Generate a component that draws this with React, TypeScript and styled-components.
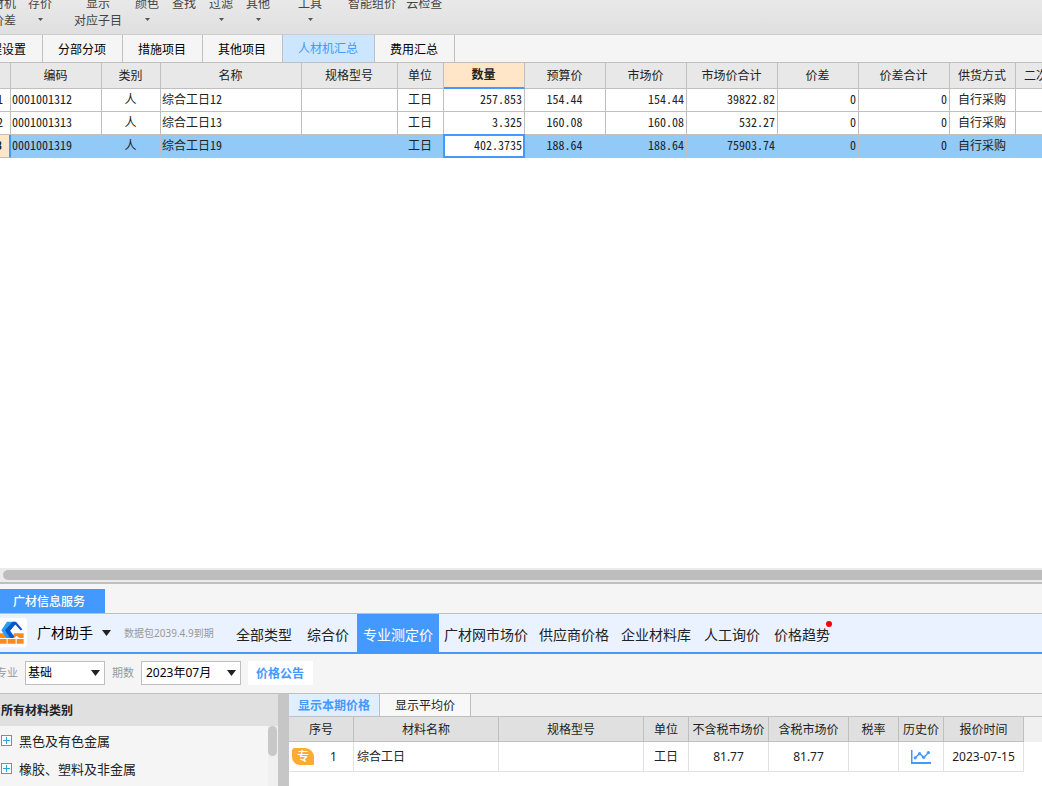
import React from "react";
import styled, { createGlobalStyle, css } from "styled-components";

const c = {
  line: "#bfbfbf",
  softLine: "#e2e2e2",
  blue: "#4499ff",
  bar: "#f5f5f5",
  head: "#e8e8e8",
  ink: "#222222",
};

const Global = createGlobalStyle`
  *, *::before, *::after { box-sizing: border-box; }
  body { margin: 0; background: #fff; color: ${c.ink}; overflow: hidden;
    font: 12px/16px "Noto Sans", "Noto Sans CJK SC", sans-serif; }
  button, select { font: inherit; color: inherit; border: 0; padding: 0; margin: 0; background: none; white-space: nowrap; }
`;

const Page = styled.div`
  display: flex;
  flex-direction: column;
  min-height: 100vh;
  overflow: hidden;
`;

/* ---------- ribbon ---------- */
const Ribbon = styled.header`
  display: flex;
  align-items: flex-end;
  height: 35px;
  padding-bottom: 5px;
  overflow: hidden;
  background: linear-gradient(#e9e9e9, #dfdfdf);
  border-bottom: 1px solid #cdcdcd;
`;
const RibbonGroup = styled.div<{ $before: number; $gap: number }>`
  display: flex;
  margin-left: ${(p) => p.$before}px;
  gap: ${(p) => p.$gap}px;
`;
const RibbonButton = styled.button<{ $cut?: boolean }>`
  display: flex;
  flex-direction: column;
  align-items: ${(p) => (p.$cut ? "flex-end" : "center")};
  ${(p) => p.$cut && css`width: 16px;`}
  height: 34px;
  flex: none;
  line-height: 17px;
  color: #444;
`;
const Drop = styled.span`
  display: flex;
  height: 15px;
  align-items: center;
`;

/* ---------- module tabs ---------- */
const ModuleTabs = styled.nav`
  display: flex;
  height: 28px;
  background: ${c.bar};
  border-bottom: 1px solid ${c.line};
`;
const ModuleTab = styled.button<{ $on?: boolean; $cut?: boolean }>`
  display: flex;
  align-items: center;
  justify-content: ${(p) => (p.$cut ? "flex-end" : "center")};
  flex: none;
  padding: ${(p) => (p.$on ? 0 : 2)}px 16px 0 15px;
  ${(p) => p.$cut && css`width: 43px; padding-left: 0; overflow: hidden;`}
  border-right: 1px solid ${c.line};
  background: ${(p) => (p.$on ? "#cce6ff" : c.bar)};
  color: ${(p) => (p.$on ? c.blue : "#000")};
`;

/* ---------- resource grid ---------- */
const GridArea = styled.main`
  flex: 1;
  overflow: hidden;
  background: #fff;
`;
const Grid = styled.table`
  width: 1082px;
  table-layout: fixed;
  border-collapse: separate;
  border-spacing: 0;
  font-family: "Noto Sans CJK SC", sans-serif;
  font-feature-settings: "hwid";
`;
const GridHead = styled.th<{ $on?: boolean }>`
  height: 26px;
  padding: 0 1px 2px 0;
  overflow: hidden;
  white-space: nowrap;
  font-weight: ${(p) => (p.$on ? 700 : 400)};
  background: ${(p) => (p.$on ? "#ffe6c8" : c.head)};
  border-right: 1px solid ${c.line};
  border-bottom: ${(p) => (p.$on ? `2px solid ${c.blue}` : `1px solid ${c.line}`)};
`;
const GridRow = styled.tr<{ $on?: boolean }>`
  background: ${(p) => (p.$on ? "#91c9f7" : "#fff")};
`;
type Align = "left" | "center" | "right";
const GridCell = styled.td<{ $align: Align; $edit?: boolean }>`
  height: 23px;
  padding: 0 2px 2px 1px;
  overflow: hidden;
  white-space: nowrap;
  text-align: ${(p) => p.$align};
  border-right: 1px solid ${c.line};
  border-bottom: 1px solid ${c.line};
  ${(p) =>
    p.$edit &&
    css`
      position: relative;
      background: #fff;
      border-color: ${c.blue};
      box-shadow: inset 1px 1px ${c.blue}, inset -1px -1px ${c.blue}, -1px -1px ${c.blue},
        -1px 0 ${c.blue}, 0 -1px ${c.blue};
    `}
`;
const RowNumber = styled.th<{ $on?: boolean }>`
  padding: 0 0 2px;
  overflow: hidden;
  font-weight: ${(p) => (p.$on ? 700 : 400)};
  background: ${(p) => (p.$on ? "#ffe6c8" : "#fff")};
  border-right: ${(p) => (p.$on ? `2px solid ${c.blue}` : `1px solid ${c.line}`)};
  border-bottom: 1px solid ${c.line};
`;
const RowDigits = styled.span`
  display: flex;
  justify-content: flex-end;
  padding-right: 7px;
`;
const HScroll = styled.div`
  height: 16px;
  padding: 2px 0 0 3px;
  background: #ebebeb;
  border-bottom: 2px solid ${c.line};
`;
const HThumb = styled.div`
  height: 10px;
  border-radius: 5px 0 0 5px;
  background: #bdbdbd;
`;

/* ---------- price service panel ---------- */
const DockTabs = styled.div`
  display: flex;
  align-items: flex-end;
  height: 30px;
  background: ${c.bar};
  border-bottom: 1px solid ${c.line};
`;
const DockTab = styled.button`
  width: 105px;
  height: 24px;
  padding: 2px 7px 0 0;
  background: ${c.blue};
  color: #fff;
  font-weight: 500;
`;
const Assistant = styled.nav`
  display: flex;
  align-items: stretch;
  height: 40px;
  background: #ebf2ff;
  border-bottom: 2px solid ${c.blue};
  font-size: 14px;
`;
const Brand = styled.button`
  display: flex;
  align-items: center;
  gap: 9px;
  color: #000;
`;
const BrandName = styled.span`
  display: flex;
  align-items: center;
  gap: 9px;
`;
const Expiry = styled.span`
  display: flex;
  align-items: center;
  width: 118px;
  padding-left: 13px;
  font-size: 10px;
  color: #999;
  white-space: nowrap;
`;
const SourceTab = styled.button<{ $pad: number; $on?: boolean }>`
  position: relative;
  flex: none;
  padding: 3px ${(p) => p.$pad}px 0;
  background: ${(p) => (p.$on ? c.blue : "transparent")};
  color: ${(p) => (p.$on ? "#fff" : c.ink)};
`;
const NewDot = styled.i`
  position: absolute;
  top: 7px;
  right: 5px;
  width: 6px;
  height: 6px;
  border-radius: 50%;
  background: #f00;
`;
const Filters = styled.form`
  display: flex;
  align-items: center;
  height: 40px;
  padding-bottom: 2px;
  background: ${c.bar};
  border-bottom: 1px solid ${c.line};
`;
const FilterLabel = styled.label<{ $cut?: boolean }>`
  display: flex;
  justify-content: flex-end;
  flex: none;
  width: ${(p) => (p.$cut ? 25 : 36)}px;
  padding-right: 7px;
  overflow: hidden;
  white-space: nowrap;
  font-size: 11px;
  color: #999;
`;
const SelectBox = styled.span<{ $w: number }>`
  position: relative;
  display: flex;
  width: ${(p) => p.$w}px;
  height: 24px;
  border: 1px solid ${c.line};
  background: #fff;
  svg { position: absolute; right: 4px; top: 8px; pointer-events: none; }
`;
const Select = styled.select<{ $indent: number }>`
  appearance: none;
  width: 100%;
  padding: 1px 0 0 ${(p) => p.$indent}px;
  color: #000;
`;
const Notice = styled.button`
  height: 24px;
  margin-left: 7px;
  padding: 2px 9px 0 8px;
  background: #fff;
  color: ${c.blue};
  font-weight: 700;
`;
const Body = styled.div`
  display: flex;
  align-items: stretch;
`;
const Sidebar = styled.aside`
  width: 278px;
  flex: none;
  display: flex;
  flex-direction: column;
  background: ${c.bar};
`;
const SideTitle = styled.h2`
  margin: 0;
  height: 32px;
  padding: 2px 0 0 1px;
  font-size: 12px;
  line-height: 30px;
  background: #e0e0e0;
`;
const SideScroll = styled.div`
  display: flex;
  flex: 1;
`;
const Tree = styled.ul`
  flex: 1;
  margin: 0;
  padding: 0 0 4px;
  list-style: none;
  font-size: 13px;
`;
const TreeItem = styled.button`
  display: flex;
  align-items: center;
  gap: 7px;
  height: 28px;
  padding: 1px 0 0 1px;
`;
const VTrack = styled.div`
  width: 10px;
  background: #f0f0f0;
`;
const VThumb = styled.div`
  width: 9px;
  height: 30px;
  border-radius: 5px;
  background: #c8c8c8;
`;
const Splitter = styled.div`
  width: 11px;
  flex: none;
  background: #c6c6c6;
`;
const Results = styled.section`
  flex: 1;
  min-width: 0;
  overflow: hidden;
`;
const ViewTabs = styled.div`
  display: flex;
  height: 23px;
  background: #f1f1f1;
  border-bottom: 1px solid ${c.line};
`;
const ViewTab = styled.button<{ $on?: boolean }>`
  width: 91px;
  padding-top: 2px;
  border-right: 1px solid ${c.line};
  background: ${(p) => (p.$on ? "#e0efff" : "#f8f8f8")};
  color: ${(p) => (p.$on ? c.blue : c.ink)};
  font-weight: ${(p) => (p.$on ? 700 : 400)};
`;
const HeadStrip = styled.div`
  background: linear-gradient(#f0f0f0 25px, #fff 25px);
`;
const PriceTable = styled.table`
  width: 735px;
  table-layout: fixed;
  border-collapse: separate;
  border-spacing: 0;
`;
const PriceHead = styled.th`
  height: 25px;
  padding: 2px 0 0;
  white-space: nowrap;
  font-weight: 400;
  background: #e0e0e0;
  border-right: 1px solid ${c.line};
  border-bottom: 1px solid ${c.line};
`;
const PriceCell = styled.td<{ $align?: Align }>`
  height: 30px;
  padding: 0 3px;
  white-space: nowrap;
  text-align: ${(p) => p.$align ?? "center"};
  background: #fff;
  border-right: 1px solid ${c.softLine};
  border-bottom: 1px solid ${c.softLine};
  svg { display: block; margin: 0 auto; }
`;
const Ordinal = styled.span`
  display: flex;
  align-items: center;
  gap: 16px;
`;
const Badge = styled.span`
  width: 22px;
  height: 17px;
  border-radius: 3px 9px 1px 8px;
  background: #ffaa33;
  color: #fff;
  font-size: 12px;
  font-weight: 500;
  line-height: 17px;
  text-align: center;
`;

const Caret = ({ w = 9, h = 6, fill = "#222" }: { w?: number; h?: number; fill?: string }) => (
  <svg width={w} height={h} viewBox="0 0 10 6" preserveAspectRatio="none" aria-hidden>
    <path d="M0 0H10L5 6Z" fill={fill} />
  </svg>
);

const Logo = () => (
  <svg width="28" height="30" viewBox="0 0 84 90" aria-hidden>
    <path d="M0 0H70Q81 0 81 11V77Q81 88 70 88H0Z" fill="#fff" />
    <path d="M0 46H12L21 60H0ZM42 46H71V60H58L50 53L42 60H36ZM0 63H20V77H0ZM23 63H47V77H23ZM50 63H71V77H50Z" fill="#ff8a17" />
    <path d="M4 37L21 11H42L22 37L36 60H19Z" fill="#2b9bf4" />
    <path d="M38 11H48L67 34L62 38L46 20L31 38L43 57L38 60H30L15 37Z" fill="#0b56c8" />
    <path d="M46 20L62 38L55 44H37L31 38Z" fill="#fff" />
  </svg>
);

const PlusBox = () => (
  <svg width="11" height="11" viewBox="0 0 11 11" aria-hidden>
    <rect x=".5" y=".5" width="10" height="10" fill="#fff" stroke="#8a8a8a" />
    <path d="M2 5.5H9M5.5 2V9" stroke="#28a8d8" />
  </svg>
);

const Trend = () => (
  <svg width="20" height="14" viewBox="0 0 20 14" fill={c.blue} aria-hidden>
    <path d="M0 0H1.5V12H20V14H0Z" />
    <path d="M4 8L8.6 3.5L12.7 7.5L17.6 2.5" fill="none" stroke={c.blue} strokeWidth="1.4" />
    <circle cx="4.2" cy="7.8" r="1.6" />
    <circle cx="8.6" cy="3.7" r="1.6" />
    <circle cx="12.7" cy="7.3" r="1.6" />
    <circle cx="17.4" cy="2.6" r="1.6" />
  </svg>
);

type Tool = { top: string; bottom?: string; drop?: boolean; cut?: boolean };
const ribbon: { before: number; gap: number; tools: Tool[] }[] = [
  { before: 0, gap: 12, tools: [{ top: "材机", bottom: "价差", cut: true }, { top: "存价", drop: true }] },
  {
    before: 22,
    gap: 13,
    tools: [
      { top: "显示", bottom: "对应子目" },
      { top: "颜色", drop: true },
      { top: "查找" },
      { top: "过滤", drop: true },
      { top: "其他", drop: true },
    ],
  },
  { before: 28, gap: 12, tools: [{ top: "工具", drop: true }] },
  { before: 26, gap: 10, tools: [{ top: "智能组价" }, { top: "云检查" }] },
];

const modules = ["程设置", "分部分项", "措施项目", "其他项目", "人材机汇总", "费用汇总"];

const columns: { name: string; w: number; align: Align }[] = [
  { name: "编码", w: 91, align: "left" },
  { name: "类别", w: 59, align: "center" },
  { name: "名称", w: 141, align: "left" },
  { name: "规格型号", w: 96, align: "left" },
  { name: "单位", w: 46, align: "center" },
  { name: "数量", w: 81, align: "right" },
  { name: "预算价", w: 81, align: "center" },
  { name: "市场价", w: 81, align: "right" },
  { name: "市场价合计", w: 91, align: "right" },
  { name: "价差", w: 81, align: "right" },
  { name: "价差合计", w: 91, align: "right" },
  { name: "供货方式", w: 66, align: "center" },
  { name: "二次分析", w: 66, align: "center" },
];

const rows = [
  ["0001001312", "人", "综合工日12", "", "工日", "257.853", "154.44", "154.44", "39822.82", "0", "0", "自行采购", ""],
  ["0001001313", "人", "综合工日13", "", "工日", "3.325", "160.08", "160.08", "532.27", "0", "0", "自行采购", ""],
  ["0001001319", "人", "综合工日19", "", "工日", "402.3735", "188.64", "188.64", "75903.74", "0", "0", "自行采购", ""],
];
const activeRow = 2;
const activeCol = 5;

const sources = ["全部类型", "综合价", "专业测定价", "广材网市场价", "供应商价格", "企业材料库", "人工询价", "价格趋势"];

const priceColumns: [string, number][] = [
  ["序号", 65],
  ["材料名称", 145],
  ["规格型号", 145],
  ["单位", 45],
  ["不含税市场价", 80],
  ["含税市场价", 80],
  ["税率", 50],
  ["历史价", 45],
  ["报价时间", 80],
];

export default function App() {
  return (
    <Page>
      <Global />
      <Ribbon>
        {ribbon.map((g, i) => (
          <RibbonGroup key={i} $before={g.before} $gap={g.gap}>
            {g.tools.map((t) => (
              <RibbonButton key={t.top} type="button" $cut={t.cut}>
                <span>{t.top}</span>
                {t.bottom && <span>{t.bottom}</span>}
                {t.drop && (
                  <Drop>
                    <Caret w={5} h={3} fill="#555" />
                  </Drop>
                )}
              </RibbonButton>
            ))}
          </RibbonGroup>
        ))}
      </Ribbon>

      <ModuleTabs>
        {modules.map((m, i) => (
          <ModuleTab key={m} type="button" $cut={i === 0} $on={i === 4}>
            {m}
          </ModuleTab>
        ))}
      </ModuleTabs>

      <GridArea>
        <Grid>
          <colgroup>
            <col style={{ width: 11 }} />
            {columns.map((col) => (
              <col key={col.name} style={{ width: col.w }} />
            ))}
          </colgroup>
          <thead>
            <tr>
              <GridHead />
              {columns.map((col, i) => (
                <GridHead key={col.name} $on={i === activeCol}>
                  {col.name}
                </GridHead>
              ))}
            </tr>
          </thead>
          <tbody>
            {rows.map((row, r) => (
              <GridRow key={row[0]} $on={r === activeRow}>
                <RowNumber scope="row" $on={r === activeRow}>
                  <RowDigits>{r + 1}</RowDigits>
                </RowNumber>
                {row.map((v, i) => (
                  <GridCell key={i} $align={columns[i].align} $edit={r === activeRow && i === activeCol}>
                    {v}
                  </GridCell>
                ))}
              </GridRow>
            ))}
          </tbody>
        </Grid>
      </GridArea>
      <HScroll>
        <HThumb />
      </HScroll>

      <DockTabs>
        <DockTab type="button">广材信息服务</DockTab>
      </DockTabs>
      <Assistant>
        <Brand type="button">
          <Logo />
          <BrandName>
            广材助手
            <Caret />
          </BrandName>
        </Brand>
        <Expiry>数据包2039.4.9到期</Expiry>
        {sources.map((s, i) => (
          <SourceTab key={s} type="button" $pad={11 - s.length} $on={i === 2}>
            {s}
            {i === sources.length - 1 && <NewDot />}
          </SourceTab>
        ))}
      </Assistant>
      <Filters>
        <FilterLabel htmlFor="major" $cut>
          专业
        </FilterLabel>
        <SelectBox $w={80}>
          <Select id="major" $indent={2}>
            <option>基础</option>
          </Select>
          <Caret />
        </SelectBox>
        <FilterLabel htmlFor="period">期数</FilterLabel>
        <SelectBox $w={100}>
          <Select id="period" $indent={4}>
            <option>2023年07月</option>
          </Select>
          <Caret />
        </SelectBox>
        <Notice type="button">价格公告</Notice>
      </Filters>

      <Body>
        <Sidebar>
          <SideTitle>所有材料类别</SideTitle>
          <SideScroll>
            <Tree>
              {["黑色及有色金属", "橡胶、塑料及非金属"].map((t) => (
                <li key={t}>
                  <TreeItem type="button">
                    <PlusBox />
                    {t}
                  </TreeItem>
                </li>
              ))}
            </Tree>
            <VTrack>
              <VThumb />
            </VTrack>
          </SideScroll>
        </Sidebar>
        <Splitter />
        <Results>
          <ViewTabs>
            <ViewTab type="button" $on>
              显示本期价格
            </ViewTab>
            <ViewTab type="button">显示平均价</ViewTab>
          </ViewTabs>
          <HeadStrip>
            <PriceTable>
              <colgroup>
                {priceColumns.map(([n, w]) => (
                  <col key={n} style={{ width: w }} />
                ))}
              </colgroup>
              <thead>
                <tr>
                  {priceColumns.map(([n]) => (
                    <PriceHead key={n}>{n}</PriceHead>
                  ))}
                </tr>
              </thead>
              <tbody>
                <tr>
                  <PriceCell>
                    <Ordinal>
                      <Badge>专</Badge>1
                    </Ordinal>
                  </PriceCell>
                  <PriceCell $align="left">综合工日</PriceCell>
                  <PriceCell />
                  <PriceCell>工日</PriceCell>
                  <PriceCell>81.77</PriceCell>
                  <PriceCell>81.77</PriceCell>
                  <PriceCell />
                  <PriceCell>
                    <Trend />
                  </PriceCell>
                  <PriceCell>2023-07-15</PriceCell>
                </tr>
              </tbody>
            </PriceTable>
          </HeadStrip>
        </Results>
      </Body>
    </Page>
  );
}
